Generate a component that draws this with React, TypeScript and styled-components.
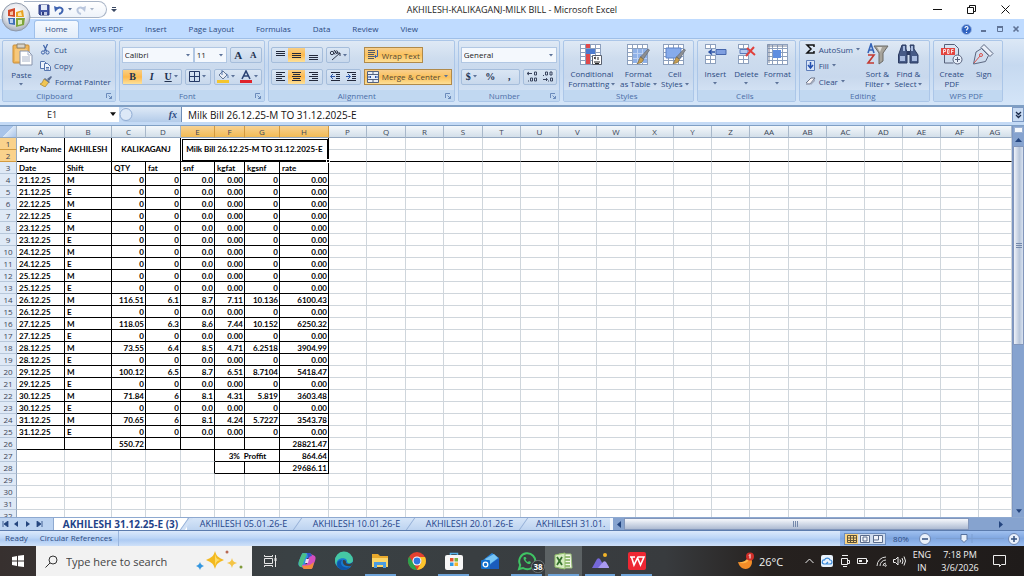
import React from "react";
import styled, { createGlobalStyle, css } from "styled-components";

const ui = '"Open Sans", "Noto Sans", sans-serif';
const cellFont = 'Lato, "Open Sans", sans-serif';
const ink = "#2c4a82";

const GlobalStyle = createGlobalStyle`
  * { box-sizing: border-box; }
  html, body { margin: 0; padding: 0; }
  body { font-family: ${ui}; font-size: 8px; color: ${ink}; background: #fff; }
  button, input, select { font: inherit; color: inherit; margin: 0; padding: 0; border: 0; background: none; border-radius: 0; }
  a { color: inherit; text-decoration: none; }
  svg { display: block; flex: none; }
`;

const App = styled.div`
  display: flex;
  flex-direction: column;
  height: 100vh;
  overflow: hidden;
  position: relative;
`;

/* ---------- title bar ---------- */

const TitleBar = styled.header`
  display: grid;
  grid-template-columns: 1fr auto 1fr;
  align-items: center;
  height: 19px;
  flex: none;
  background: #fff;
`;

const QuickAccess = styled.div`
  display: flex;
  align-items: center;
  gap: 4px;
  height: 19px;
  margin-left: 24px;
`;

const QuickPill = styled.div`
  display: flex;
  align-items: center;
  gap: 4px;
  width: 83px;
  height: 17px;
  padding-left: 14px;
  border: 1px solid #a8b4c6;
  border-left: 0;
  border-radius: 0 9px 9px 0;
  background: linear-gradient(#fff, #eef3fa);
`;

const Title = styled.h1`
  margin: 0;
  font-size: 9px;
  line-height: 19px;
  font-weight: 400;
  color: #1d1d1d;
  white-space: pre;
`;

const WindowButtons = styled.div`
  display: flex;
  justify-content: flex-end;
  padding-right: 2px;
`;

const WindowButton = styled.button`
  display: flex;
  align-items: center;
  justify-content: center;
  width: 34px;
  height: 18px;
`;

const OfficeButton = styled.button`
  position: absolute;
  left: 1px;
  top: 2px;
  width: 30px;
  height: 30px;
  z-index: 2;
`;

const IconButton = styled.button`
  display: flex;
  align-items: center;
  justify-content: center;
`;

/* ---------- ribbon ---------- */

const TabRow = styled.nav`
  display: flex;
  align-items: flex-end;
  height: 19px;
  flex: none;
  padding-left: 34px;
  background: #bfdbff;
`;

const Tab = styled.button<{ $active?: boolean }>`
  height: 18px;
  padding: 0 10px 1px;
  font-size: 8px;
  line-height: 16px;
  border: 1px solid transparent;
  border-bottom: 0;
  white-space: nowrap;
  ${(p) =>
    p.$active &&
    css`
      border-color: #9fc0ea;
      border-radius: 3px 3px 0 0;
      background: linear-gradient(#f4f9ff, #e3edf9);
    `}
`;

const TabRowEnd = styled.div`
  display: flex;
  align-items: center;
  gap: 8px;
  height: 18px;
  margin-left: auto;
  padding-right: 4px;
`;

const Ribbon = styled.section`
  display: flex;
  gap: 3px;
  flex: none;
  height: 69px;
  padding: 1px 2px 3px;
  border-top: 1px solid #9fbfe8;
  border-bottom: 2px solid #7f9fc4;
  background: linear-gradient(#dce8f6, #c6d9f0 40%, #d4e5f8);
`;

const Group = styled.section<{ $w: number }>`
  display: flex;
  flex-direction: column;
  flex: 0 0 ${(p) => p.$w}px;
  border: 1px solid #abc6e8;
  border-radius: 2px;
  background: linear-gradient(#dfe9f5, #cddcee 30%, #c8d8ed 60%, #dae8f8);
`;

const GroupBody = styled.div<{ $stack?: boolean; $gap?: number }>`
  display: flex;
  flex: 1;
  min-height: 0;
  flex-direction: ${(p) => (p.$stack ? "column" : "row")};
  justify-content: ${(p) => (p.$stack ? "flex-start" : "center")};
  gap: ${(p) => p.$gap ?? 0}px;
  padding: ${(p) => (p.$stack ? "6px 2px 0" : "0 2px")};
`;

const GroupLabel = styled.footer`
  display: flex;
  align-items: center;
  height: 11px;
  padding-right: 3px;
  font-size: 8px;
  line-height: 11px;
  color: #4b6ea8;
  background: #c1d8f1;
`;

const GroupName = styled.span`
  flex: 1;
  text-align: center;
`;

const BigButton = styled.button<{ $w: number }>`
  display: flex;
  flex-direction: column;
  align-items: center;
  width: ${(p) => p.$w}px;
  flex: none;
  padding-top: 2px;
  font-size: 8px;
  line-height: 10px;
  white-space: nowrap;
`;

const BigText = styled.span`
  display: flex;
  flex-direction: column;
  align-items: center;
  margin-top: 4px;
`;

const WithArrow = styled.span`
  display: flex;
  align-items: center;
  gap: 2px;
  min-height: 8px;
`;

const SmallColumn = styled.div`
  display: flex;
  flex-direction: column;
  align-items: flex-start;
  padding-right: 2px;
`;

const SmallButton = styled.button`
  display: flex;
  align-items: center;
  gap: 3px;
  height: 16px;
  font-size: 8px;
  white-space: nowrap;
`;

const Line = styled.div`
  display: flex;
  gap: 3px;
  height: 22px;
`;

const ToolSet = styled.div<{ $w: number }>`
  display: flex;
  width: ${(p) => p.$w}px;
  height: 16px;
  border: 1px solid #a5bddb;
  border-radius: 2px;
  background: linear-gradient(#dae6f4, #c8d8ec);
`;

const Tool = styled.button<{ $on?: boolean }>`
  display: flex;
  align-items: center;
  justify-content: center;
  gap: 2px;
  flex: 1;
  color: #20304e;
  background: ${(p) => (p.$on ? "linear-gradient(#f8cf86, #fdb94e 50%, #fde19a)" : "none")};
`;

const GoldButton = styled.button<{ $w: number }>`
  display: flex;
  align-items: center;
  gap: 3px;
  width: ${(p) => p.$w}px;
  height: 16px;
  padding: 0 2px;
  border: 1px solid #b08a4a;
  background: linear-gradient(#f8cf8c, #fbc15c 50%, #fddf96);
  color: #574a34;
  font-size: 8px;
  white-space: nowrap;
`;

const Gap = styled.span<{ $w: number }>`
  width: ${(p) => p.$w}px;
  flex: none;
`;

const Pickers = styled.div`
  display: flex;
`;

const Picker = styled.label<{ $w: number }>`
  display: flex;
  align-items: center;
  width: ${(p) => p.$w}px;
  height: 16px;
  padding: 0 3px 0 2px;
  border: 1px solid #b1c7e3;
  background: #f4f8fd;
  color: #1a1a1a;
`;

const PickerSelect = styled.select`
  appearance: none;
  flex: 1;
  min-width: 0;
  font-size: 8px;
  line-height: 14px;
  outline: 0;
`;

const Glyph = styled.span<{ $size?: number; $italic?: boolean; $under?: boolean }>`
  font-family: "Liberation Serif", serif;
  font-weight: 700;
  font-size: ${(p) => p.$size ?? 10}px;
  line-height: 12px;
  font-style: ${(p) => (p.$italic ? "italic" : "normal")};
  text-decoration: ${(p) => (p.$under ? "underline" : "none")};
`;

/* ---------- formula bar ---------- */

const FormulaBar = styled.div`
  display: flex;
  flex: none;
  height: 19px;
  padding-bottom: 3px;
  background: #c4daf5;
  border-bottom: 1px solid #7f9fc4;
`;

const NameBox = styled.label`
  display: flex;
  align-items: center;
  width: 119px;
  padding-right: 3px;
  background: #fff;
  color: #222;
`;

const NameInput = styled.input`
  flex: 1;
  min-width: 0;
  padding-right: 6px;
  text-align: center;
  font-size: 9px;
  outline: 0;
`;

const FunctionArea = styled.div`
  display: flex;
  justify-content: space-between;
  align-items: center;
  width: 63px;
  padding: 0 4px 0 0;
  border-right: 1px solid #6f8db5;
  background: linear-gradient(#dfeaf7, #b3cbe9);
  border-radius: 8px 0 0 8px;
`;

const FormulaInput = styled.input`
  flex: 1;
  min-width: 0;
  padding-left: 6px;
  background: #fff;
  color: #111;
  font-size: 10px;
  outline: 0;
`;

const ExpandButton = styled(IconButton)`
  width: 12px;
  border: 1px solid #7d9ac4;
  background: #c8dbf3;
`;

/* ---------- sheet ---------- */

const SheetArea = styled.main`
  display: flex;
  flex: 1;
  min-height: 0;
`;

const SheetView = styled.div`
  flex: 1;
  min-width: 0;
  overflow: hidden;
`;

const Sheet = styled.table`
  width: 100%;
  table-layout: fixed;
  border-collapse: separate;
  border-spacing: 0;
  font-family: ${cellFont};
  color: #000;
`;

const ColHead = styled.th<{ $on?: boolean }>`
  height: 12px;
  padding: 0;
  font-family: ${ui};
  font-size: 8px;
  line-height: 10px;
  font-weight: 400;
  color: #3c4656;
  border-right: 1px solid ${(p) => (p.$on ? "#d39a3f" : "#a8b8ca")};
  border-bottom: 1px solid #94a8c0;
  background: ${(p) => (p.$on ? "linear-gradient(#f8d293, #f2bb55)" : "linear-gradient(#f4f8fb, #d3dfea)")};
`;

const CornerHead = styled(ColHead)`
  background: linear-gradient(135deg, #a9c4e9 50%, #dbe8f7 50%, #a9c4e9);
`;

const RowHead = styled.th<{ $on?: boolean }>`
  height: 12px;
  padding: 0;
  font-family: ${ui};
  font-size: 8px;
  line-height: 11px;
  font-weight: 400;
  color: #3c4656;
  text-align: center;
  border-right: 1px solid #94a8c0;
  border-bottom: 1px solid ${(p) => (p.$on ? "#d39a3f" : "#b7c7da")};
  background: ${(p) => (p.$on ? "#fad28c" : "#dfe9f6")};
`;

type Side = { $r?: boolean; $b?: boolean; $align?: string };
const Cell = styled.td<Side>`
  height: 12px;
  padding: 2px 1px 0 2px;
  font-size: 8px;
  line-height: 9px;
  font-weight: 700;
  white-space: pre;
  text-align: ${(p) => p.$align ?? "left"};
  border-right: 1px solid ${(p) => (p.$r ? "#000" : "#cfd6dc")};
  border-bottom: 1px solid ${(p) => (p.$b ? "#000" : "#cfd6dc")};
`;

const HeadingCell = styled(Cell)`
  padding: 0;
`;

const SelectedCell = styled(HeadingCell)`
  position: relative;
  outline: 1px solid #000;
  outline-offset: -2px;
`;

const FillHandle = styled.span`
  position: absolute;
  right: -2px;
  bottom: -2px;
  width: 4px;
  height: 4px;
  border: 1px solid #fff;
  background: #000;
`;

const VerticalScroll = styled.div`
  display: flex;
  flex-direction: column;
  align-items: stretch;
  width: 12px;
  border-left: 1px solid #7d97c4;
  background: #86a3cf;
`;

const SplitBox = styled.div`
  height: 6px;
  margin: 1px;
  background: #f6f9fd;
  border: 1px solid #9db3d4;
`;

const VerticalThumb = styled.div`
  display: flex;
  align-items: center;
  justify-content: center;
  flex: 0 0 51%;
  border: 1px solid #8296bb;
  border-radius: 1px;
  background: linear-gradient(90deg, #eef2f9, #b7c5da 60%, #d8e2f0);
`;

const ScrollArrow = styled(IconButton)`
  flex: none;
  width: 11px;
  height: 12px;
  color: #24457e;
`;

const ScrollSpace = styled.div`
  flex: 1;
`;

const SheetTabs = styled.div`
  display: flex;
  flex: none;
  height: 14px;
  border-top: 1px solid #8ea9d0;
  border-bottom: 1px solid #5c7cae;
  background: #bcd3f1;
`;

const TabNav = styled.div`
  display: flex;
  width: 54px;
  padding-right: 8px;
  border-right: 1px solid #8ea9d0;
  color: #24457e;
`;

const TabNavButton = styled(IconButton)`
  flex: 1;
`;

const SheetTab = styled.button<{ $active?: boolean }>`
  flex: none;
  position: relative;
  width: ${(p) => (p.$active ? 133 : 113)}px;
  font-size: ${(p) => (p.$active ? 10 : 9)}px;
  line-height: 12px;
  font-weight: ${(p) => (p.$active ? 700 : 400)};
  color: #1f4389;
  white-space: nowrap;
  text-align: center;
  background: ${(p) => (p.$active ? "#fff" : "linear-gradient(#d6e5f8, #bdd3f0)")};

  &::after {
    content: "";
    position: absolute;
    right: -2px;
    top: 0;
    width: 4px;
    height: 12px;
    z-index: 1;
    transform: skewX(-35deg);
    border-left: 1px solid #93aed6;
    background: ${(p) => (p.$active ? "#d0e0f5" : "none")};
  }

  &:last-child {
    flex: 1;
    padding-left: 10px;
    text-align: left;
  }

  &:last-child::after {
    display: none;
  }
`;

const TabStrip = styled.div`
  display: flex;
  flex: 0 0 556px;
  overflow: hidden;
`;

const HorizontalScroll = styled.div`
  display: flex;
  flex: 1;
  align-items: stretch;
  border-left: 3px solid #f0f5fc;
  background: #86a3cf;
`;

const HorizontalThumb = styled.div`
  display: flex;
  align-items: center;
  justify-content: center;
  flex: 0 0 84%;
  border: 1px solid #8296bb;
  background: linear-gradient(#f6f8fc, #c3cddf 70%, #aebbd2);
`;

/* ---------- status bar ---------- */

const StatusBar = styled.footer`
  display: flex;
  align-items: center;
  justify-content: space-between;
  flex: none;
  height: 15px;
  padding-left: 5px;
  background: linear-gradient(#dbe9fb, #bdd6f7 45%, #aecbf3 60%, #cfe1f9);
  font-size: 8px;
  line-height: 13px;
`;

const StatusTexts = styled.div`
  display: flex;
  gap: 12px;
  height: 15px;
`;

const StatusText = styled.span<{ $rule?: boolean }>`
  padding-right: ${(p) => (p.$rule ? 6 : 0)}px;
  border-right: ${(p) => (p.$rule ? "1px solid #9ab6de" : "0")};
`;

const StatusTools = styled.div`
  display: flex;
  align-items: center;
  width: 184px;
  height: 15px;
  padding: 0 4px;
  background: linear-gradient(#9fc0ef, #7fa6e0 50%, #9abdf0);
`;

const ViewButtons = styled.div`
  display: flex;
  width: 42px;
  height: 12px;
  border: 1px solid #6d8dbd;
  background: #cfdcee;
`;

const ViewButton = styled(IconButton)<{ $on?: boolean }>`
  flex: 1;
  background: ${(p) => (p.$on ? "#fbd583" : "none")};
`;

const ZoomText = styled.button`
  width: 30px;
  text-align: center;
  font-size: 8px;
  line-height: 12px;
`;

const ZoomTrack = styled.div`
  display: flex;
  align-items: center;
  justify-content: center;
  flex: 1;
`;

/* ---------- taskbar ---------- */

const Taskbar = styled.footer`
  display: flex;
  align-items: stretch;
  flex: none;
  height: 30px;
  background: linear-gradient(90deg, #37302f, #3a4144 28%, #383b3e 65%, #26211f 75%, #1f1b1a);
  color: #f2f2f2;
`;

const StartButton = styled(IconButton)`
  width: 36px;
`;

const SearchBox = styled.label`
  display: flex;
  align-items: center;
  gap: 8px;
  width: 216px;
  padding: 0 8px 0 9px;
  background: #f2f2f2;
`;

const SearchInput = styled.input`
  flex: 1;
  min-width: 0;
  font-size: 11px;
  outline: 0;
  color: #444;
  &::placeholder { color: #444; opacity: 1; }
`;

const Apps = styled.div`
  display: flex;
  width: 403px;
`;

const AppButton = styled.button<{ $open?: boolean; $active?: boolean }>`
  display: flex;
  align-items: center;
  justify-content: center;
  position: relative;
  flex: 1;
  background: ${(p) => (p.$active ? "#5c6264" : "none")};
`;

const OpenMark = styled.span`
  position: absolute;
  left: 3px;
  right: 3px;
  bottom: 0;
  height: 2px;
  background: #6ea3d8;
`;

const Badge = styled.span`
  position: absolute;
  right: 0;
  bottom: 3px;
  min-width: 14px;
  height: 13px;
  border: 1px solid #6f7577;
  border-radius: 7px;
  background: #303537;
  font-size: 8px;
  line-height: 11px;
  font-weight: 700;
  color: #fff;
`;

const Tray = styled.div`
  display: flex;
  align-items: center;
  margin-left: auto;
  padding-right: 16px;
`;

const Weather = styled.button`
  display: flex;
  align-items: center;
  gap: 4px;
  width: 60px;
  font-size: 11px;
  white-space: nowrap;
`;

const TrayIcon = styled(IconButton)`
  width: 18px;
  height: 30px;
`;

const TrayText = styled.button<{ $w: number }>`
  display: flex;
  flex-direction: column;
  align-items: center;
  width: ${(p) => p.$w}px;
  font-size: 9px;
  line-height: 13px;
  white-space: nowrap;
`;

/* ---------- icons ---------- */

const Arrow = ({ size = 3, color = "#5c7299" }: { size?: number; color?: string }) => (
  <svg width={size + 1} height={size} viewBox="0 0 8 6" aria-hidden="true">
    <path d="M0 0h8L4 5z" fill={color} />
  </svg>
);

const Launcher = () => (
  <svg width="6" height="6" viewBox="0 0 6 6" fill="none" stroke="#6a8abb">
    <path d="M.5 5V.5H5M2.500 2.500l3 3M5.500 3v2.500H3" />
  </svg>
);

const OfficeOrb = () => (
  <svg width="30" height="30" viewBox="0 0 30 30">
    <defs>
      <radialGradient id="orb" cx="50%" cy="35%" r="65%">
        <stop offset="0" stopColor="#fff" />
        <stop offset=".6" stopColor="#e3e6ec" />
        <stop offset="1" stopColor="#a3abb8" />
      </radialGradient>
    </defs>
    <circle cx="15" cy="15" r="14" fill="url(#orb)" stroke="#8f99aa" />
    <path d="M7 8l7-2v9l-7-1z" fill="#d2492a" />
    <path d="M9 10l3-1v4H9z" fill="#f3c3a6" />
    <path d="M15 10l7-2 1 7h-8z" fill="#e8a324" />
    <path d="M17 11l3-1 1 4h-4z" fill="#fbe6a5" />
    <path d="M7 16h7v7l-6-1z" fill="#3f6fb7" />
    <path d="M9 17h3v4H9z" fill="#bcd2ef" />
    <path d="M15 16h9l-1 7-8 2z" fill="#7ea53a" />
    <path d="M17 18h4v4l-4 1z" fill="#dcebb8" />
  </svg>
);

const SaveIcon = () => (
  <svg width="12" height="12" viewBox="0 0 12 12">
    <path d="M1 1h10v10H2L1 10z" fill="#4457a5" stroke="#2d3c80" />
    <path d="M3 1h6v5H3z" fill="#e6ecf8" />
    <path d="M3 8h6v3H3z" fill="#c3cbe6" />
    <path d="M4 8h2v3H4z" fill="#2d3c80" />
  </svg>
);

const UndoIcon = ({ flip, color }: { flip?: boolean; color: string }) => (
  <svg width="10" height="10" viewBox="0 0 10 10">
    <g transform={flip ? "matrix(-1 0 0 1 10 0)" : undefined}>
      <path d="M3 3.500c3-2 6-.5 5.500 2C8.300 7.500 7 8.500 5 9" fill="none" stroke={color} strokeWidth="2" />
      <path d="M0 1l1 6 4-4z" fill={color} />
    </g>
  </svg>
);

const PasteIcon = () => (
  <svg width="22" height="23" viewBox="0 0 22 23">
    <rect x="2" y="2" width="16" height="18" rx="1" fill="#efb65a" stroke="#c98d38" />
    <path d="M6 1h8v4H6z" fill="#d9d4c9" stroke="#8b8271" />
    <path d="M4 6h12v12H4z" fill="#f6c87c" />
    <path d="M9 8h8l4 4v10H9z" fill="#fff" stroke="#8793ab" />
    <path d="M17 8v4h4M11 14h8M11 16h8M11 18h8" fill="none" stroke="#a8b3c8" />
  </svg>
);

const CutIcon = () => (
  <svg width="11" height="11" viewBox="0 0 11 11" fill="none" stroke="#3f63a8">
    <path d="M7.500 0L4.500 7M3.500 1l3 6" strokeWidth="1.200" />
    <circle cx="3" cy="8.500" r="1.600" />
    <circle cx="7.500" cy="8.500" r="1.600" />
  </svg>
);

const CopyIcon = () => (
  <svg width="11" height="11" viewBox="0 0 11 11" fill="#eef3fb" stroke="#5675ae">
    <path d="M.5 1.500h4l2 2v5h-6z" />
    <path d="M4.500 3.500h3l3 3v4h-6z" />
    <path d="M6 7.500h3M6 9h3" />
  </svg>
);

const PainterIcon = () => (
  <svg width="12" height="11" viewBox="0 0 12 11">
    <path d="M7 3l4-3 1 1-3 4z" fill="#5b6f94" />
    <path d="M4 3l5 3-4 5-5-3 2-1z" fill="#f1c552" stroke="#a98128" strokeWidth=".7" />
    <path d="M5 2l5 4-1 1-5-4z" fill="#6b7991" />
  </svg>
);

const BordersIcon = () => (
  <svg width="11" height="11" viewBox="0 0 11 11" fill="none" stroke="#263a66">
    <path d="M.5.5h10v10H.5zM5.500.5v10M.5 5.500h10" />
  </svg>
);

const BucketIcon = () => (
  <svg width="12" height="13" viewBox="0 0 12 13">
    <path d="M2 5l4-4 4 4-4 4z" fill="#e8edf5" stroke="#667895" />
    <path d="M5 0v5M9 4c2 0 2 2 2 4" fill="none" stroke="#5577ad" />
    <path d="M0 10h12v3H0z" fill="#f4c52d" />
  </svg>
);

const FontColorIcon = () => (
  <svg width="12" height="13" viewBox="0 0 12 13">
    <path d="M2 9l4-8 4 8M4 6h4" fill="none" stroke="#2c4374" strokeWidth="1.600" />
    <path d="M0 10h12v3H0z" fill="#e0242b" />
  </svg>
);

const Bars = ({ rows }: { rows: [number, number, number][] }) => (
  <svg width="11" height="11" viewBox="0 0 11 11" stroke="#22283a" fill="none">
    {rows.map(([x, y, w]) => (
      <path key={y} d={`M${x} ${y}.5h${w}`} />
    ))}
  </svg>
);

const OrientIcon = () => (
  <svg width="12" height="12" viewBox="0 0 12 12" fill="none" stroke="#2f374c">
    <path d="M3 11l8-7M11 7V4H8" />
    <circle cx="3" cy="4" r="1.700" />
    <path d="M4 2.500l2 3M5 1l3 4" />
    <circle cx="7.500" cy="3" r="1.200" />
  </svg>
);

const IndentIcon = ({ right }: { right?: boolean }) => (
  <svg width="11" height="11" viewBox="0 0 11 11" fill="none" stroke="#22283a">
    <path d="M1 1.500h9M6 3.500h4M6 5.500h4M6 7.500h4M1 9.500h9" />
    <path d={right ? "M0 5.500h4M2 3l2.500 2.500L2 8" : "M1 5.500h4M3 3L.5 5.500 3 8"} stroke="#2b55a8" />
  </svg>
);

const WrapIcon = () => (
  <svg width="12" height="12" viewBox="0 0 12 12" fill="none" stroke="#555a66">
    <path d="M1 1.500h7M1 3.500h7M1 5.500h6M1 7.500h6M1 9.500h6" />
    <path d="M10.500 1v6.500H7.500M9 6L7.500 7.500 9 9" stroke="#3f63a8" />
  </svg>
);

const MergeIcon = () => (
  <svg width="12" height="12" viewBox="0 0 12 12" fill="none" stroke="#55627d">
    <path d="M.5.5h11v11H.5z" fill="#e8eef8" />
    <path d="M.5 3.500h11M.5 8.500h11M6 .5v3M6 8.500v3" />
    <path d="M1 6h3M3 5l1 1-1 1M11 6H8M9 5L8 6l1 1" stroke="#2950a5" />
  </svg>
);

const DecimalIcon = ({ less }: { less?: boolean }) => (
  <svg width="12" height="11" viewBox="0 0 12 11" fill="none" stroke="#39445e">
    {less ? (
      <path d="M3.500 1h2v3h-2zM8 1h2v3H8zM8.500 7h2v3h-2zM1 8.500h4M4 7l1.500 1.500L4 10M1.500 4v1M6.500 9.500v1" />
    ) : (
      <path d="M8.500 1h2v3h-2zM4.500 7h2v3h-2zM8.500 7h2v3h-2zM6 2.500H1M3 1L1 2.500 3 4M2.500 9.500v1" />
    )}
  </svg>
);

const Grid = ({ x, y, c, r, s = 5, h = 4 }: { x: number; y: number; c: number; r: number; s?: number; h?: number }) => (
  <>
    {Array.from({ length: c * r }, (_, i) => (
      <rect
        key={i}
        x={x + (i % c) * s + 0.5}
        y={y + Math.floor(i / c) * h + 0.5}
        width={s}
        height={h}
        fill="#fff"
        stroke="#8da0bd"
      />
    ))}
  </>
);

const Brush = () => (
  <>
    <path d="M21 6l1.500 1-6 9-3-2z" fill="#8d8f92" stroke="#5c6068" strokeWidth=".6" />
    <path d="M13.500 14l3 2.500c-1 3-3 4-6.500 4 2-1.500 1.500-4 3.500-6.500z" fill="#c79f52" stroke="#6e5a30" strokeWidth=".6" />
  </>
);

const BigIcon = ({ children }: { children: React.ReactNode }) => (
  <svg width="23" height="22" viewBox="0 0 23 22">
    {children}
  </svg>
);

const ConditionalIcon = () => (
  <BigIcon>
    <Grid x={0} y={1} c={4} r={5} />
    <path d="M6 1h4v4H6zM6 9h4v4H6zM6 13h4v8H6z" fill="#e0494b" />
    <path d="M6 6h9v5H6z" fill="#4c7bcf" />
    <path d="M12.500 12.500h9v9h-9z" fill="#fff" stroke="#59606e" />
    <path d="M16 14l-2 1 2 1M18 14v3M14 19h6M15 20.500h4" fill="none" stroke="#222" />
  </BigIcon>
);

const FormatTableIcon = () => (
  <BigIcon>
    <Grid x={0} y={1} c={4} r={5} />
    <path d="M6 6h14v14H6z" fill="#8fb1e8" />
    <path d="M6 10.500h14M6 15.500h14M10.500 6v14M15.500 6v14" stroke="#bdd1f3" />
    <Brush />
  </BigIcon>
);

const CellStylesIcon = () => (
  <BigIcon>
    <Grid x={0} y={1} c={4} r={5} />
    <path d="M3 5h15v10H3z" fill="#86abeb" stroke="#5d82c6" />
    <Brush />
  </BigIcon>
);

const InsertIcon = () => (
  <BigIcon>
    <Grid x={1} y={1} c={2} r={1} />
    <Grid x={1} y={12} c={2} r={2} />
    <path d="M12 6.500h10v5H12z" fill="#7f9fe0" stroke="#4666ab" />
    <path d="M5 9h6M8 6.500L5 9l3 2.500" fill="none" stroke="#2a51a4" strokeWidth="1.400" />
  </BigIcon>
);

const DeleteIcon = () => (
  <BigIcon>
    <Grid x={3} y={1} c={2} r={1} />
    <Grid x={3} y={12} c={2} r={2} />
    <path d="M5 6.500h8v4H5z" fill="#b6c9ee" stroke="#5b7abb" />
    <path d="M12 5l8 7M19 4l-8 9" fill="none" stroke="#e0403c" strokeWidth="2" />
  </BigIcon>
);

const FormatIcon = () => (
  <BigIcon>
    <Grid x={1} y={1} c={4} r={5} />
    <path d="M7 7h8v8H7z" fill="#5f8ee0" />
    <path d="M1 3h20M3 1v19" stroke="#7a869c" fill="none" />
  </BigIcon>
);

const SortIcon = () => (
  <BigIcon>
    <path d="M8 3h14l-5 7v8l-4 3V10z" fill="#a7a49c" stroke="#6b6a67" />
    <path d="M11 4h5l-2 5z" fill="#dedcd6" />
    <path d="M2 10l3-9 3 9M3 7h4" fill="none" stroke="#3564b7" strokeWidth="1.600" />
    <path d="M2 12h6l-6 8h6" fill="none" stroke="#c23a32" strokeWidth="1.600" />
  </BigIcon>
);

const FindIcon = () => (
  <BigIcon>
    <path d="M5 2h4v4l1 3v11H1.500v-8z" fill="#465a86" stroke="#2b3a61" />
    <path d="M13 2h4v4l4 6v8h-8V9l1-3z" fill="#465a86" stroke="#2b3a61" />
    <path d="M10 8h3v4h-3z" fill="#2b3a61" />
    <path d="M3 13h5v5H3zM15 13h5v5h-5zM6 3h2v5H6zM14 3h2v5h-2z" fill="#a9bce0" />
  </BigIcon>
);

const CreatePdfIcon = () => (
  <BigIcon>
    <path d="M4.500 5V1.500h10l4 4v8M4.500 12v8h9" fill="none" stroke="#56607a" />
    <rect x="1" y="5" width="14" height="7" fill="#e3453f" />
    <path d="M3.500 10.500v-4h2v2h-2M7.500 6.500v4h1.500V6.500zM11.500 10.500v-4h2M11.500 8.500h2" fill="none" stroke="#fff" strokeWidth=".8" />
    <circle cx="17.500" cy="16.500" r="4.500" fill="#e8effa" stroke="#56607a" />
    <path d="M17.500 14v5M15 16.500h5" stroke="#56607a" />
  </BigIcon>
);

const SignIcon = () => (
  <BigIcon>
    <path d="M12 1.500l9 9-3 3-9-9z" fill="#e9eff9" stroke="#5c6780" />
    <path d="M9.500 5.500l7 7-3 6-12 2.500 2.500-12z" fill="none" stroke="#5c6780" />
    <path d="M2 20l6-7" stroke="#d8504b" />
    <circle cx="9" cy="12" r="1.500" fill="none" stroke="#d8504b" />
  </BigIcon>
);

const SigmaIcon = () => (
  <svg width="11" height="10" viewBox="0 0 11 10" fill="none" stroke="#111" strokeWidth="1.500">
    <path d="M9 3V1H2l4 4-4 4h7V7" />
  </svg>
);

const FillIcon = () => (
  <svg width="11" height="11" viewBox="0 0 11 11">
    <path d="M1.500.5h8v10h-8z" fill="#d8e4f7" stroke="#5d7db9" />
    <path d="M5.500 2v5M3 5l2.500 3L8 5" fill="none" stroke="#2450b0" strokeWidth="1.500" />
  </svg>
);

const ClearIcon = () => (
  <svg width="11" height="9" viewBox="0 0 11 9">
    <path d="M1 6l5-5h4L5 7z" fill="#f8f4f6" stroke="#6d7588" />
    <path d="M1 6h4v2H1zM5 7l5-5v2L6 8z" fill="#a3abbd" />
  </svg>
);

const StarSpark = () => (
  <svg width="48" height="22" viewBox="0 0 48 22">
    <path d="M19 1c1.500 5 3 6.500 9 9-6 2.500-7.500 4-9 9-1.500-5-3-6.500-9-9 6-2.500 7.500-4 9-9z" fill="#f3b91f" />
    <path d="M19 4c1 4 2 5 5 6-3 1-4 2-5 6z" fill="#ffdc62" />
    <path d="M36 8c.8 3 1.500 4 5 5-3.500 1-4.200 2-5 5-.8-3-1.500-4-5-5 3.500-1 4.200-2 5-5z" fill="#f4c445" />
    <path d="M4 12c.8 2.500 1.500 3 4 4-2.500 1-3.200 1.500-4 4-.8-2.500-1.500-3-4-4 2.500-1 3.200-1.500 4-4z" fill="#3597e0" />
    <circle cx="31" cy="2" r="1.500" fill="#b86a55" />
    <circle cx="45" cy="17" r="1.500" fill="#7f9a3b" />
  </svg>
);

const AppIcon = ({ children }: { children: React.ReactNode }) => (
  <svg width="20" height="20" viewBox="0 0 20 20">
    {children}
  </svg>
);

const TaskViewIcon = () => (
  <AppIcon>
    <path d="M4.500 4v1.500h8V4M4.500 16v-1.500h8V16M4.500 7.500h8v5h-8zM15.500 4v12" fill="none" stroke="#e8e8e8" />
    <path d="M14.500 7h2v3h-2z" fill="#e8e8e8" />
  </AppIcon>
);
const CopilotIcon = () => (
  <AppIcon>
    <path d="M6 2h6c2 0 2 1 3 4l-5 1-2 8c-1 2-2 2-4 1-3-1-3-3-2-6l2-5c1-2 1-3 2-3z" fill="#2f8fe6" />
    <path d="M2 10l2-5c1-2 1-3 3-3l3 1-3 7-2 6c-3 0-4-2-3-6z" fill="#4bbf87" />
    <path d="M14 18H8c-2 0-2-1-3-4l5-1 2-8c1-2 2-2 4-1 3 1 3 3 2 6l-2 5c-1 2-1 3-2 3z" fill="#d34fc0" />
    <path d="M14 18H8c-2 0-2-1-3-3l8-1 4-3c-1 4-1 7-3 7z" fill="#f18a3c" />
    <path d="M10 2h2c2 0 2 1 3 3-2 0-3 1-3.500 3z" fill="#3453c6" />
    <path d="M9 8h3l-1 4H8z" fill="#f3d9ef" />
  </AppIcon>
);
const EdgeIcon = () => (
  <AppIcon>
    <circle cx="10" cy="10" r="9" fill="#1679cf" />
    <path d="M1 10a9 9 0 0 1 18-1c0 4-5 4-6 2 1-4-6-5-9-2-1 1-2 3-1 6-1-1-2-3-2-5z" fill="#45c7a4" />
    <path d="M8 9c-3 4 1 9 8 7-3 4-10 4-12 0-2-4 0-7 4-7z" fill="#0f55a8" />
    <path d="M9 9c3 0 3 1 3 3 2 2 5 1 7-1 0 1-1 3-2 4-6 1-9-2-8-6z" fill="#3a4144" />
  </AppIcon>
);
const ExplorerIcon = () => (
  <AppIcon>
    <path d="M2 3h6l2 2h8v11H2z" fill="#e9a92c" />
    <path d="M2 7h16v9H2z" fill="#fbd566" />
    <path d="M4 11h12v6h-3v-3H7v3H4z" fill="#4a9be0" />
  </AppIcon>
);
const ChromeIcon = () => (
  <AppIcon>
    <circle cx="10" cy="10" r="9" fill="#e3402f" />
    <path d="M2.200 5.500L7 13l3 6a9 9 0 0 1-7.800-13.500z" fill="#2ba24c" />
    <path d="M18 6a9 9 0 0 1-8 13l4-7c1-2 0-5-2-6z" fill="#fbc52c" />
    <circle cx="10" cy="10" r="4.500" fill="#fff" />
    <circle cx="10" cy="10" r="3.400" fill="#2f76e0" />
  </AppIcon>
);
const StoreIcon = () => (
  <AppIcon>
    <path d="M6.500 5V2.500h7V5" fill="none" stroke="#56b2ea" strokeWidth="1.500" />
    <rect x="1" y="4" width="18" height="15" rx="2" fill="#f7f7f7" />
    <path d="M6 7h3.500v3.500H6z" fill="#e5532d" />
    <path d="M10.500 7H14v3.500h-3.500z" fill="#7cb342" />
    <path d="M6 11.500h3.500V15H6z" fill="#2f9be6" />
    <path d="M10.500 11.500H14V15h-3.500z" fill="#f5b52a" />
  </AppIcon>
);
const OutlookIcon = () => (
  <AppIcon>
    <path d="M3 9l9-7 7 5v11H5z" fill="#2b84d8" />
    <path d="M5 8l9-5 4 4-8 6z" fill="#77c4f5" />
    <path d="M19 7v11H6l6-6z" fill="#1b5cbc" />
    <rect x="1" y="9" width="9" height="9" rx="1" fill="#1272cf" />
    <circle cx="5.500" cy="13.500" r="2.300" fill="none" stroke="#fff" strokeWidth="1.300" />
  </AppIcon>
);
const WhatsAppIcon = () => (
  <AppIcon>
    <path d="M2 18l1.200-4A8 8 0 1 1 6 17z" fill="none" stroke="#3fc463" strokeWidth="2" />
    <path d="M7 6c-2 2 3 8 6 7l1-2-2-1-1 1c-1 0-2-1-2.500-2.500l1-1L8.500 6z" fill="#3fc463" />
  </AppIcon>
);
const ExcelIcon = () => (
  <AppIcon>
    <path d="M6 3h12l1 14H6z" fill="#f3f8ea" stroke="#9cc27b" />
    <path d="M12 6h5M12 9h5M12 12h5M12 15h5" stroke="#7bab55" strokeWidth="1.500" />
    <path d="M2 4l10-2v16L2 16z" fill="#d5ebc0" stroke="#8fbd68" />
    <path d="M4 6l5 8M9 6l-5 8" stroke="#34702d" strokeWidth="1.800" />
  </AppIcon>
);
const PhotosIcon = () => (
  <AppIcon>
    <path d="M2 17l5-9c1-1 2-1 3 0l5 9z" fill="#7568d8" />
    <path d="M8 17l5-6c1-1 2-1 3 0l3 5c0 1 0 1-1 1z" fill="#a99af0" />
    <circle cx="15" cy="4" r="2" fill="#f3b429" />
  </AppIcon>
);
const WpsIcon = () => (
  <AppIcon>
    <rect x="1" y="1" width="18" height="18" rx="2" fill="#ee2733" />
    <path d="M3 6h5M4.500 6L7 14l3.500-7 3 7L17 6h-6" fill="none" stroke="#fff" strokeWidth="1.600" />
  </AppIcon>
);

/* ---------- data ---------- */

const rows: string[][] = [
  ["21.12.25", "M", "0", "0", "0.0", "0.00", "0", "0.00"],
  ["21.12.25", "E", "0", "0", "0.0", "0.00", "0", "0.00"],
  ["22.12.25", "M", "0", "0", "0.0", "0.00", "0", "0.00"],
  ["22.12.25", "E", "0", "0", "0.0", "0.00", "0", "0.00"],
  ["23.12.25", "M", "0", "0", "0.0", "0.00", "0", "0.00"],
  ["23.12.25", "E", "0", "0", "0.0", "0.00", "0", "0.00"],
  ["24.12.25", "M", "0", "0", "0.0", "0.00", "0", "0.00"],
  ["24.12.25", "E", "0", "0", "0.0", "0.00", "0", "0.00"],
  ["25.12.25", "M", "0", "0", "0.0", "0.00", "0", "0.00"],
  ["25.12.25", "E", "0", "0", "0.0", "0.00", "0", "0.00"],
  ["26.12.25", "M", "116.51", "6.1", "8.7", "7.11", "10.136", "6100.43"],
  ["26.12.25", "E", "0", "0", "0.0", "0.00", "0", "0.00"],
  ["27.12.25", "M", "118.05", "6.3", "8.6", "7.44", "10.152", "6250.32"],
  ["27.12.25", "E", "0", "0", "0.0", "0.00", "0", "0.00"],
  ["28.12.25", "M", "73.55", "6.4", "8.5", "4.71", "6.2518", "3904.99"],
  ["28.12.25", "E", "0", "0", "0.0", "0.00", "0", "0.00"],
  ["29.12.25", "M", "100.12", "6.5", "8.7", "6.51", "8.7104", "5418.47"],
  ["29.12.25", "E", "0", "0", "0.0", "0.00", "0", "0.00"],
  ["30.12.25", "M", "71.84", "6", "8.1", "4.31", "5.819", "3603.48"],
  ["30.12.25", "E", "0", "0", "0.0", "0.00", "0", "0.00"],
  ["31.12.25", "M", "70.65", "6", "8.1", "4.24", "5.7227", "3543.78"],
  ["31.12.25", "E", "0", "0", "0.0", "0.00", "0", "0.00"],
  ["", "", "550.72", "", "", "", "", "28821.47"],
];

const columns: [string, number | undefined][] = [
  ["A", 48], ["B", 47], ["C", 34], ["D", 35], ["E", 34], ["F", 30], ["G", 35], ["H", 49],
  ["P", 38], ["Q", 39], ["R", 38], ["S", 39], ["T", 38], ["U", 38], ["V", 38], ["W", 39], ["X", 38],
  ["Y", 38], ["Z", 38], ["AA", 39], ["AB", 38], ["AC", 38], ["AD", 38], ["AE", 38], ["AF", 38], ["AG", undefined],
];

const Blanks = ({ n, b }: { n: number; b?: boolean }) => (
  <>
    {Array.from({ length: n }, (_, i) => (
      <Cell key={i} $b={b} />
    ))}
  </>
);

const SheetGrid = () => (
  <Sheet>
    <colgroup>
      <col style={{ width: 17 }} />
      {columns.map(([name, w]) => (
        <col key={name} style={{ width: w }} />
      ))}
    </colgroup>
    <thead>
      <tr>
        <CornerHead aria-label="Select all" />
        {columns.map(([name]) => (
          <ColHead key={name} $on={"EFGH".includes(name)}>{name}</ColHead>
        ))}
      </tr>
    </thead>
    <tbody>
      <tr>
        <RowHead $on>1</RowHead>
        <HeadingCell rowSpan={2} $r $b $align="center">Party Name</HeadingCell>
        <HeadingCell rowSpan={2} $r $b $align="center">AKHILESH</HeadingCell>
        <HeadingCell rowSpan={2} colSpan={2} $r $b $align="center">KALIKAGANJ</HeadingCell>
        <SelectedCell rowSpan={2} colSpan={4} $r $b $align="center">
          Milk Bill 26.12.25-M TO 31.12.2025-E
          <FillHandle />
        </SelectedCell>
        <Blanks n={18} />
      </tr>
      <tr>
        <RowHead $on>2</RowHead>
        <Blanks n={18} b />
      </tr>
      <tr>
        <RowHead>3</RowHead>
        {["Date", "Shift", "QTY", "fat", "snf", "kgfat", "kgsnf", "rate"].map((t) => (
          <Cell key={t} $r $b>{t}</Cell>
        ))}
        <Blanks n={18} />
      </tr>
      {rows.map((r, i) => (
        <tr key={i}>
          <RowHead>{i + 4}</RowHead>
          {r.map((t, j) => (
            <Cell key={j} $r $b $align={j > 1 ? "right" : "left"}>{t}</Cell>
          ))}
          <Blanks n={18} />
        </tr>
      ))}
      <tr>
        <RowHead>27</RowHead>
        <Blanks n={4} />
        <Cell $r />
        <Cell $r $b colSpan={2} $align="center">{"3%  Proffit"}</Cell>
        <Cell $r $b $align="right">864.64</Cell>
        <Blanks n={18} />
      </tr>
      <tr>
        <RowHead>28</RowHead>
        <Blanks n={4} />
        <Cell $r />
        <Cell $r $b />
        <Cell $r $b />
        <Cell $r $b $align="right">29686.11</Cell>
        <Blanks n={18} />
      </tr>
      {[29, 30, 31, 32].map((n) => (
        <tr key={n}>
          <RowHead>{n}</RowHead>
          <Blanks n={26} />
        </tr>
      ))}
    </tbody>
  </Sheet>
);

const Big = ({ icon, lines, w, arrow }: { icon: React.ReactNode; lines: string[]; w: number; arrow?: "below" | "inline" }) => (
  <BigButton $w={w}>
    {icon}
    <BigText>
      {lines.map((l, i) => (
        <WithArrow key={l}>
          {l}
          {arrow === "inline" && i === lines.length - 1 && <Arrow />}
        </WithArrow>
      ))}
      {arrow === "below" && <WithArrow><Arrow /></WithArrow>}
    </BigText>
  </BigButton>
);

const RibbonGroup = ({ name, w, launch, children }: { name: string; w: number; launch?: boolean; children: React.ReactNode }) => (
  <Group $w={w}>
    {children}
    <GroupLabel>
      <GroupName>{name}</GroupName>
      {launch && <IconButton aria-label={name + " options"}><Launcher /></IconButton>}
    </GroupLabel>
  </Group>
);

const TaskbarApp = ({ label, icon, open, active, badge }: { label: string; icon: React.ReactNode; open?: boolean; active?: boolean; badge?: string }) => (
  <AppButton aria-label={label} $active={active}>
    {icon}
    {badge && <Badge>{badge}</Badge>}
    {open && <OpenMark />}
  </AppButton>
);

export default function ExcelWindow() {
  return (
    <App>
      <GlobalStyle />
      <OfficeButton aria-label="Office menu"><OfficeOrb /></OfficeButton>
      <TitleBar>
        <QuickAccess>
          <QuickPill>
            <IconButton aria-label="Save"><SaveIcon /></IconButton>
            <IconButton aria-label="Undo"><UndoIcon color="#3e63b0" /></IconButton>
            <Arrow />
            <IconButton aria-label="Redo"><UndoIcon flip color="#b9c6dd" /></IconButton>
            <Arrow color="#a9b5c8" />
          </QuickPill>
          <IconButton aria-label="Customize">
            <svg width="6" height="6" viewBox="0 0 6 6"><path d="M1 0h4v1H1zM0 2h6L3 5z" fill="#3b4963" /></svg>
          </IconButton>
        </QuickAccess>
        <Title>AKHILESH-KALIKAGANJ-MILK BILL - Microsoft Excel</Title>
        <WindowButtons>
          <WindowButton aria-label="Minimize">
            <svg width="9" height="9" viewBox="0 0 9 9"><path d="M0 4.500h9" stroke="#111" /></svg>
          </WindowButton>
          <WindowButton aria-label="Restore">
            <svg width="9" height="9" viewBox="0 0 9 9" fill="none" stroke="#111"><path d="M.5 2.500h6v6h-6zM2.500 2.500v-2h6v6h-2" /></svg>
          </WindowButton>
          <WindowButton aria-label="Close">
            <svg width="9" height="9" viewBox="0 0 9 9" stroke="#111"><path d="M.5.5l8 8M8.500.5l-8 8" /></svg>
          </WindowButton>
        </WindowButtons>
      </TitleBar>

      <TabRow>
        {["Home", "WPS PDF", "Insert", "Page Layout", "Formulas", "Data", "Review", "View"].map((t, i) => (
          <Tab key={t} $active={i === 0}>{t}</Tab>
        ))}
        <TabRowEnd>
          <IconButton aria-label="Help">
            <svg width="11" height="11" viewBox="0 0 11 11">
              <circle cx="5.500" cy="5.500" r="5" fill="#2f62c0" stroke="#9bb7e4" />
              <path d="M4 4c0-2 3-2 3 0 0 1-1.500 1-1.500 2.500M5.500 8v1" fill="none" stroke="#fff" strokeWidth="1.200" />
            </svg>
          </IconButton>
          <IconButton aria-label="Minimize workbook">
            <svg width="8" height="8" viewBox="0 0 8 8"><path d="M1 6h5" stroke="#5f7396" strokeWidth="2" /></svg>
          </IconButton>
          <IconButton aria-label="Restore workbook">
            <svg width="8" height="8" viewBox="0 0 8 8"><path d="M1.500 2.500h5v4h-5z" fill="none" stroke="#5f7396" /><path d="M1 2h6" stroke="#5f7396" strokeWidth="2" /></svg>
          </IconButton>
          <IconButton aria-label="Close workbook">
            <svg width="8" height="8" viewBox="0 0 8 8"><path d="M1.500 1.500l5 5M6.500 1.500l-5 5" stroke="#5f7396" strokeWidth="1.600" /></svg>
          </IconButton>
        </TabRowEnd>
      </TabRow>

      <Ribbon>
        <RibbonGroup name="Clipboard" w={113} launch>
          <GroupBody $gap={2}>
            <Big icon={<PasteIcon />} lines={["Paste"]} w={33} arrow="below" />
            <SmallColumn>
              <SmallButton><CutIcon />Cut</SmallButton>
              <SmallButton><CopyIcon />Copy</SmallButton>
              <SmallButton><PainterIcon />Format Painter</SmallButton>
            </SmallColumn>
          </GroupBody>
        </RibbonGroup>

        <RibbonGroup name="Font" w={146} launch>
          <GroupBody $stack>
            <Line>
              <Pickers>
                <Picker $w={72}>
                  <PickerSelect aria-label="Font"><option>Calibri</option></PickerSelect>
                  <Arrow />
                </Picker>
                <Picker $w={33}>
                  <PickerSelect aria-label="Font size"><option>11</option></PickerSelect>
                  <Arrow />
                </Picker>
              </Pickers>
              <ToolSet $w={32}>
                <Tool aria-label="Grow font"><Glyph $size={11}>A</Glyph></Tool>
                <Tool aria-label="Shrink font"><Glyph $size={9}>A</Glyph></Tool>
              </ToolSet>
            </Line>
            <Line>
              <ToolSet $w={60}>
                <Tool $on aria-label="Bold"><Glyph>B</Glyph></Tool>
                <Tool aria-label="Italic"><Glyph $italic>I</Glyph></Tool>
                <Tool aria-label="Underline"><Glyph $under>U</Glyph><Arrow /></Tool>
              </ToolSet>
              <ToolSet $w={26}>
                <Tool aria-label="Borders"><BordersIcon /><Arrow /></Tool>
              </ToolSet>
              <ToolSet $w={48}>
                <Tool aria-label="Fill colour"><BucketIcon /><Arrow /></Tool>
                <Tool aria-label="Font colour"><FontColorIcon /><Arrow /></Tool>
              </ToolSet>
            </Line>
          </GroupBody>
        </RibbonGroup>

        <RibbonGroup name="Alignment" w={187} launch>
          <GroupBody $stack>
            <Line>
              <ToolSet $w={52}>
                <Tool aria-label="Top align"><Bars rows={[[1, 1, 9], [1, 3, 9], [1, 5, 9]]} /></Tool>
                <Tool $on aria-label="Middle align"><Bars rows={[[1, 3, 9], [1, 5, 9], [1, 7, 9]]} /></Tool>
                <Tool aria-label="Bottom align"><Bars rows={[[1, 5, 9], [1, 7, 9], [1, 9, 9]]} /></Tool>
              </ToolSet>
              <ToolSet $w={24}>
                <Tool aria-label="Orientation"><OrientIcon /><Arrow /></Tool>
              </ToolSet>
              <Gap $w={8} />
              <GoldButton $w={59}><WrapIcon />Wrap Text</GoldButton>
            </Line>
            <Line>
              <ToolSet $w={52}>
                <Tool aria-label="Align left"><Bars rows={[[1, 1, 9], [1, 3, 6], [1, 5, 9], [1, 7, 6], [1, 9, 9]]} /></Tool>
                <Tool $on aria-label="Center"><Bars rows={[[1, 1, 9], [2, 3, 7], [1, 5, 9], [2, 7, 7], [1, 9, 9]]} /></Tool>
                <Tool aria-label="Align right"><Bars rows={[[1, 1, 9], [4, 3, 6], [1, 5, 9], [4, 7, 6], [1, 9, 9]]} /></Tool>
              </ToolSet>
              <ToolSet $w={35}>
                <Tool aria-label="Decrease indent"><IndentIcon /></Tool>
                <Tool aria-label="Increase indent"><IndentIcon right /></Tool>
              </ToolSet>
              <GoldButton $w={88}><MergeIcon />Merge &amp; Center<Arrow /></GoldButton>
            </Line>
          </GroupBody>
        </RibbonGroup>

        <RibbonGroup name="Number" w={102} launch>
          <GroupBody $stack>
            <Line>
              <Picker $w={96}>
                <PickerSelect aria-label="Number format"><option>General</option></PickerSelect>
                <Arrow />
              </Picker>
            </Line>
            <Line>
              <ToolSet $w={59}>
                <Tool aria-label="Currency"><Glyph>$</Glyph><Arrow /></Tool>
                <Tool aria-label="Percent"><Glyph>%</Glyph></Tool>
                <Tool aria-label="Comma"><Glyph>,</Glyph></Tool>
              </ToolSet>
              <ToolSet $w={34}>
                <Tool aria-label="Increase decimal"><DecimalIcon /></Tool>
                <Tool aria-label="Decrease decimal"><DecimalIcon less /></Tool>
              </ToolSet>
            </Line>
          </GroupBody>
        </RibbonGroup>

        <RibbonGroup name="Styles" w={131}>
          <GroupBody>
            <Big icon={<ConditionalIcon />} lines={["Conditional", "Formatting"]} w={52} arrow="inline" />
            <Big icon={<FormatTableIcon />} lines={["Format", "as Table"]} w={41} arrow="inline" />
            <Big icon={<CellStylesIcon />} lines={["Cell", "Styles"]} w={32} arrow="inline" />
          </GroupBody>
        </RibbonGroup>

        <RibbonGroup name="Cells" w={99}>
          <GroupBody>
            <Big icon={<InsertIcon />} lines={["Insert"]} w={31} arrow="below" />
            <Big icon={<DeleteIcon />} lines={["Delete"]} w={31} arrow="below" />
            <Big icon={<FormatIcon />} lines={["Format"]} w={31} arrow="below" />
          </GroupBody>
        </RibbonGroup>

        <RibbonGroup name="Editing" w={131}>
          <GroupBody>
            <SmallColumn>
              <SmallButton><SigmaIcon />AutoSum<Arrow /></SmallButton>
              <SmallButton><FillIcon />Fill<Arrow /></SmallButton>
              <SmallButton><ClearIcon />Clear<Arrow /></SmallButton>
            </SmallColumn>
            <Big icon={<SortIcon />} lines={["Sort &", "Filter"]} w={31} arrow="inline" />
            <Big icon={<FindIcon />} lines={["Find &", "Select"]} w={31} arrow="inline" />
          </GroupBody>
        </RibbonGroup>

        <RibbonGroup name="WPS PDF" w={70}>
          <GroupBody>
            <Big icon={<CreatePdfIcon />} lines={["Create", "PDF"]} w={32} />
            <Big icon={<SignIcon />} lines={["Sign"]} w={32} />
          </GroupBody>
        </RibbonGroup>
      </Ribbon>

      <FormulaBar>
        <NameBox>
          <NameInput aria-label="Name box" defaultValue="E1" />
          <Arrow size={5} color="#111" />
        </NameBox>
        <FunctionArea>
          <svg width="14" height="15" viewBox="0 0 14 15"><circle cx="7" cy="7.500" r="6" fill="#dce8f7" stroke="#8fabd3" /></svg>
          <Glyph as="button" aria-label="Insert function" $italic>fx</Glyph>
        </FunctionArea>
        <FormulaInput aria-label="Formula" defaultValue="Milk Bill 26.12.25-M TO 31.12.2025-E" />
        <ExpandButton aria-label="Expand formula bar">
          <svg width="7" height="8" viewBox="0 0 7 8" fill="none" stroke="#1c2c4c" strokeWidth="1.300"><path d="M1 1l2.500 2.500L6 1M1 4l2.500 2.500L6 4" /></svg>
        </ExpandButton>
      </FormulaBar>

      <SheetArea>
        <SheetView><SheetGrid /></SheetView>
        <VerticalScroll>
          <SplitBox />
          <ScrollArrow aria-label="Scroll up"><svg width="7" height="4" viewBox="0 0 7 4"><path d="M0 4l3.500-4L7 4z" fill="currentColor" /></svg></ScrollArrow>
          <VerticalThumb><svg width="6" height="6" viewBox="0 0 6 6"><path d="M0 .5h6M0 2.500h6M0 4.500h6" stroke="#7589ab" /></svg></VerticalThumb>
          <ScrollSpace />
          <ScrollArrow aria-label="Scroll down"><Arrow size={5} color="#24457e" /></ScrollArrow>
        </VerticalScroll>
      </SheetArea>

      <SheetTabs>
        <TabNav>
          {["M1 0v6M6 0L2 3l4 3z", "M5 0L1 3l4 3z", "M1 0l4 3-4 3z", "M6 0v6M1 0l4 3-4 3z"].map((d, i) => (
            <TabNavButton key={d} aria-label={["First sheet", "Previous sheet", "Next sheet", "Last sheet"][i]}>
              <svg width="7" height="6" viewBox="0 0 7 6"><path d={d} fill="currentColor" stroke={i % 3 ? "none" : "currentColor"} strokeWidth=".8" /></svg>
            </TabNavButton>
          ))}
        </TabNav>
        <TabStrip>
          <SheetTab $active>AKHILESH 31.12.25-E (3)</SheetTab>
          <SheetTab>AKHILESH 05.01.26-E</SheetTab>
          <SheetTab>AKHILESH 10.01.26-E</SheetTab>
          <SheetTab>AKHILESH 20.01.26-E</SheetTab>
          <SheetTab>AKHILESH 31.01.</SheetTab>
        </TabStrip>
        <HorizontalScroll>
          <ScrollArrow aria-label="Scroll left"><svg width="4" height="7" viewBox="0 0 4 7"><path d="M4 0L0 3.500 4 7z" fill="currentColor" /></svg></ScrollArrow>
          <HorizontalThumb><svg width="7" height="6" viewBox="0 0 7 6"><path d="M.5 0v6M2.500 0v6M4.500 0v6" stroke="#7589ab" /></svg></HorizontalThumb>
          <ScrollSpace />
          <ScrollArrow aria-label="Scroll right"><svg width="4" height="7" viewBox="0 0 4 7"><path d="M0 0l4 3.500L0 7z" fill="currentColor" /></svg></ScrollArrow>
          <Gap $w={18} />
        </HorizontalScroll>
      </SheetTabs>

      <StatusBar>
        <StatusTexts>
          <StatusText>Ready</StatusText>
          <StatusText $rule>Circular References</StatusText>
        </StatusTexts>
        <StatusTools>
          <ViewButtons>
            <ViewButton $on aria-label="Normal view"><svg width="10" height="8" viewBox="0 0 10 8"><path d="M.5.5h9v7h-9zM3.500.5v7M6.500.5v7M.5 3h9M.5 5.500h9" fill="none" stroke="#5f543a" /></svg></ViewButton>
            <ViewButton aria-label="Page layout view"><svg width="10" height="8" viewBox="0 0 10 8"><path d="M.5.5h9v7h-9zM3 2h4v4H3z" fill="#f2f5fa" stroke="#5a6c8c" /></svg></ViewButton>
            <ViewButton aria-label="Page break view"><svg width="10" height="8" viewBox="0 0 10 8"><path d="M.5.5h9v7h-9zM5.500.5v4.500h-5" fill="#f2f5fa" stroke="#5a6c8c" /></svg></ViewButton>
          </ViewButtons>
          <ZoomText>80%</ZoomText>
          <Gap $w={3} />
          <IconButton aria-label="Zoom out"><svg width="12" height="12" viewBox="0 0 12 12"><circle cx="6" cy="6" r="5.500" fill="#e9f0fa" stroke="#6c86b3" /><path d="M3 6h6" stroke="#33507f" strokeWidth="1.500" /></svg></IconButton>
          <ZoomTrack><svg width="72" height="11" viewBox="0 0 72 11"><path d="M2 5.500h68M38 1v9" stroke="#7d9fd2" /><path d="M27 1.500h6v5l-3 3-3-3z" fill="#e9f0fa" stroke="#56729f" /></svg></ZoomTrack>
          <IconButton aria-label="Zoom in"><svg width="12" height="12" viewBox="0 0 12 12"><circle cx="6" cy="6" r="5.500" fill="#e9f0fa" stroke="#6c86b3" /><path d="M3 6h6M6 3v6" stroke="#33507f" strokeWidth="1.500" /></svg></IconButton>
        </StatusTools>
      </StatusBar>

      <Taskbar>
        <StartButton aria-label="Start"><svg width="12" height="12" viewBox="0 0 12 12" fill="#fff"><path d="M0 2l5-1v4.500H0zM6 .8L12 0v5.500H6zM0 6.500h5V11l-5-1zM6 6.500h6V12l-6-.8z" /></svg></StartButton>
        <SearchBox>
          <svg width="13" height="13" viewBox="0 0 13 13" fill="none" stroke="#333"><circle cx="8" cy="5" r="4" /><path d="M5 8l-4.500 4.500" /></svg>
          <SearchInput aria-label="Search" placeholder="Type here to search" />
          <StarSpark />
        </SearchBox>
        <Apps>
          <TaskbarApp label="Task view" icon={<TaskViewIcon />} />
          <TaskbarApp label="Copilot" icon={<CopilotIcon />} />
          <TaskbarApp label="Edge" icon={<EdgeIcon />} />
          <TaskbarApp label="File Explorer" icon={<ExplorerIcon />} open />
          <TaskbarApp label="Chrome" icon={<ChromeIcon />} />
          <TaskbarApp label="Store" icon={<StoreIcon />} open />
          <TaskbarApp label="Outlook" icon={<OutlookIcon />} />
          <TaskbarApp label="WhatsApp" icon={<WhatsAppIcon />} open badge="38" />
          <TaskbarApp label="Excel" icon={<ExcelIcon />} open active />
          <TaskbarApp label="Photos" icon={<PhotosIcon />} open />
          <TaskbarApp label="WPS Office" icon={<WpsIcon />} open />
        </Apps>
        <Tray>
          <Weather>
            <svg width="18" height="18" viewBox="0 0 18 18">
              <path d="M1 10c6 1 9-2 11-6 4 3 4 9 0 12-4 2-9 1-11-6z" fill="#f28c28" />
              <path d="M1 10c6 1 9-2 11-6 1 6-4 9-11 6z" fill="#ffb54a" />
              <circle cx="13" cy="4.500" r="4" fill="#cf2f2a" />
              <path d="M12 3.500l1-1v4" fill="none" stroke="#fff" />
            </svg>
            26°C
          </Weather>
          <Gap $w={3} />
          <TrayIcon aria-label="Hidden icons"><svg width="9" height="6" viewBox="0 0 9 6" fill="none" stroke="#eee"><path d="M.5 5l4-4 4 4" /></svg></TrayIcon>
          <TrayIcon aria-label="Cloud sync"><svg width="12" height="12" viewBox="0 0 12 12"><rect width="12" height="12" rx="2" fill="#e9f3fd" /><path d="M3 9h6a2 2 0 0 0 0-4 3 3 0 0 0-5.500 0A2 2 0 0 0 3 9zM5 9l2-2" fill="none" stroke="#3c8ad8" strokeWidth="1.200" /></svg></TrayIcon>
          <TrayIcon aria-label="Meet now"><svg width="10" height="12" viewBox="0 0 10 12" fill="none" stroke="#eee"><path d="M2 .5h6M1.500 3.500h6v6h-6zM7.500 5.500h2v3h-2M3 11.500h4" /></svg></TrayIcon>
          <TrayIcon aria-label="Battery"><svg width="12" height="8" viewBox="0 0 12 8"><path d="M.5 1.500h9v5h-9zM10.500 3v2" fill="none" stroke="#eee" /><path d="M2 3h3v2H2z" fill="#eee" /></svg></TrayIcon>
          <TrayIcon aria-label="Network"><svg width="11" height="11" viewBox="0 0 11 11" fill="none" stroke="#ddd"><path d="M1 10A9 9 0 0 1 10 1M4 10a6 6 0 0 1 6-6M7 10a3 3 0 0 1 3-3" /><circle cx="9.500" cy="9.500" r=".8" /></svg></TrayIcon>
          <TrayIcon aria-label="Volume"><svg width="13" height="10" viewBox="0 0 13 10" fill="none" stroke="#eee"><path d="M.5 3.500h2L5 1v8L2.500 6.500h-2zM7 3.500q1 1.500 0 3M9 2q2 3 0 6M11 .5q3 4.500 0 9" /></svg></TrayIcon>
          <TrayText $w={28}><span>ENG</span><span>IN</span></TrayText>
          <TrayText $w={48}><span>7:18 PM</span><span>3/6/2026</span></TrayText>
          <Gap $w={6} />
          <TrayIcon aria-label="Notifications"><svg width="13" height="12" viewBox="0 0 13 12" fill="none" stroke="#eee"><path d="M.5.5h12v9h-4l-2 2v-2h-6z" /></svg></TrayIcon>
        </Tray>
      </Taskbar>
    </App>
  );
}
